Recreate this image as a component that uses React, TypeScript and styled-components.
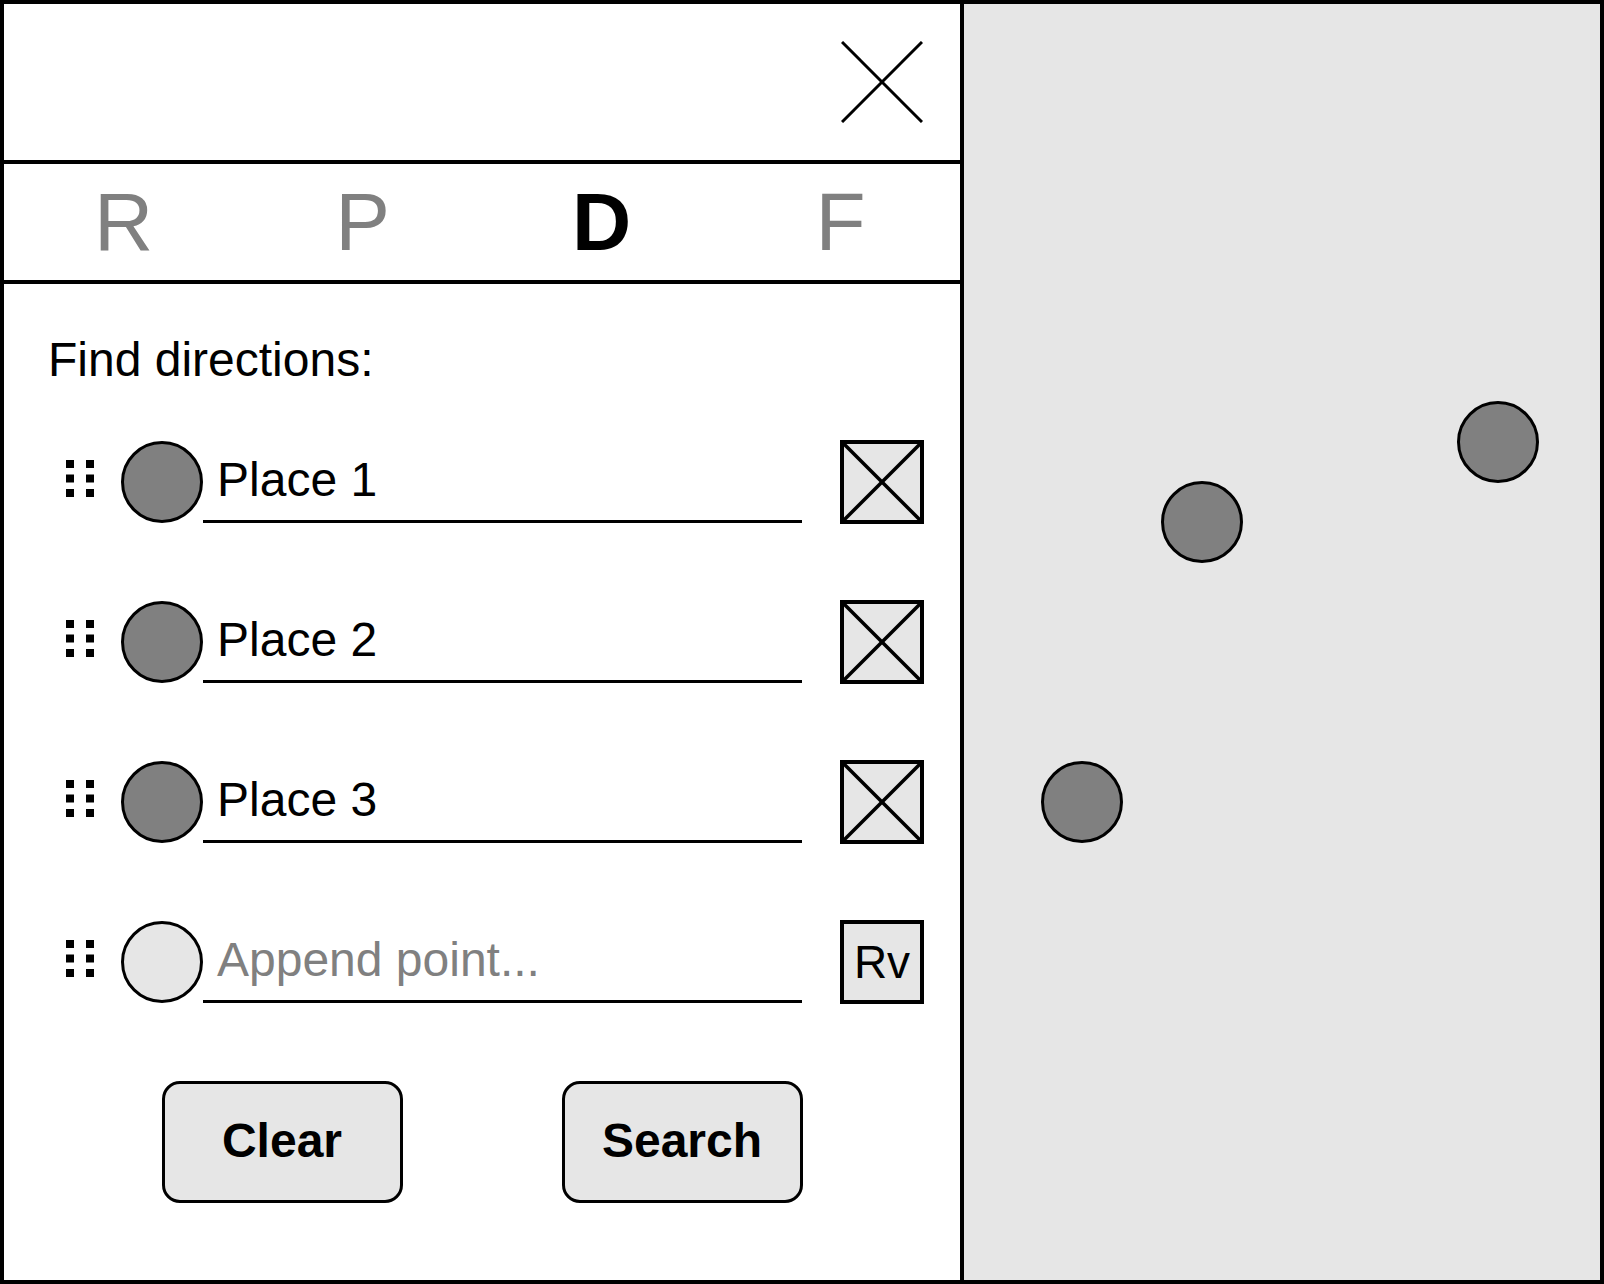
import React from 'react'
import styled, { createGlobalStyle } from 'styled-components'

const GlobalStyle = createGlobalStyle`
  html, body {
    margin: 0;
    padding: 0;
    background: #ffffff;
  }
  * {
    box-sizing: border-box;
  }
`

const Frame = styled.div`
  width: 1604px;
  height: 1284px;
  border: 4px solid #000;
  display: flex;
  font-family: 'Liberation Sans', Arial, sans-serif;
  color: #000;
  background: #fff;
`

const Panel = styled.div`
  width: 960px;
  flex-shrink: 0;
  border-right: 4px solid #000;
  display: flex;
  flex-direction: column;
`

const Header = styled.div`
  height: 160px;
  border-bottom: 4px solid #000;
  display: flex;
  align-items: center;
  justify-content: flex-end;
  padding-right: 37px;
`

const CloseButton = styled.button`
  border: none;
  background: none;
  padding: 0;
  width: 82px;
  height: 82px;
  cursor: pointer;
  display: block;
`

const Tabs = styled.div`
  height: 120px;
  border-bottom: 4px solid #000;
  display: grid;
  grid-template-columns: repeat(4, 1fr);
`

const Tab = styled.div<{ $active?: boolean }>`
  display: flex;
  align-items: center;
  justify-content: center;
  font-size: 82px;
  line-height: 1;
  font-weight: ${(p) => (p.$active ? 700 : 400)};
  color: ${(p) => (p.$active ? '#000' : '#808080')};
`

const Body = styled.div`
  display: flex;
  flex-direction: column;
  padding: 48px 36px 0 44px;
`

const Title = styled.div`
  font-size: 48px;
  line-height: 56px;
  height: 56px;
  margin-bottom: 52px;
`

const List = styled.div`
  display: flex;
  flex-direction: column;
  gap: 76px;
`

const Row = styled.div`
  height: 84px;
  display: flex;
  align-items: center;
  padding-left: 18px;
`

const Handle = styled.svg`
  width: 28px;
  height: 37px;
  margin-top: -8px;
  margin-right: 27px;
  flex-shrink: 0;
`

const Pin = styled.div<{ $empty?: boolean }>`
  width: 82px;
  height: 82px;
  border-radius: 50%;
  border: 3.5px solid #000;
  background: ${(p) => (p.$empty ? '#e6e6e6' : '#808080')};
  flex-shrink: 0;
`

const Field = styled.div<{ $placeholder?: boolean }>`
  width: 599px;
  height: 83px;
  align-self: flex-start;
  border-bottom: 3px solid #000;
  display: flex;
  align-items: center;
  padding: 0 0 0 14px;
  font-size: 48px;
  line-height: 56px;
  color: ${(p) => (p.$placeholder ? '#808080' : '#000')};
`

const Square = styled.div`
  width: 84px;
  height: 84px;
  margin-left: 38px;
  border: 4px solid #000;
  background: #e6e6e6;
  display: flex;
  align-items: center;
  justify-content: center;
  font-size: 46px;
  line-height: 1;
  flex-shrink: 0;
  overflow: hidden;

  svg {
    display: block;
    width: 100%;
    height: 100%;
  }
`

const Actions = styled.div`
  display: flex;
  justify-content: center;
  gap: 159px;
  margin-top: 77px;
  margin-left: -8px;
`

const ActionButton = styled.button`
  width: 241px;
  height: 122px;
  border: 3px solid #000;
  border-radius: 18px;
  background: #e6e6e6;
  font-family: 'Liberation Sans', Arial, sans-serif;
  font-size: 48px;
  font-weight: 700;
  color: #000;
  padding: 0 0 4px;
  cursor: pointer;
`

const Map = styled.div`
  flex: 1;
  background: #e6e6e6;
  position: relative;
`

const Marker = styled.div`
  position: absolute;
  width: 82px;
  height: 82px;
  border-radius: 50%;
  border: 3.5px solid #000;
  background: #808080;
`

const DragHandle = () => (
  <Handle viewBox="0 0 28 37">
    {[0, 14.5, 29].map((y) =>
      [0, 20].map((x) => <rect key={`${x}-${y}`} x={x} y={y} width="8" height="8" fill="#000" />)
    )}
  </Handle>
)

const RemoveBox = () => (
  <Square>
    <svg viewBox="0 0 76 76" preserveAspectRatio="none">
      <line x1="0" y1="0" x2="76" y2="76" stroke="#000" strokeWidth="3.5" />
      <line x1="76" y1="0" x2="0" y2="76" stroke="#000" strokeWidth="3.5" />
    </svg>
  </Square>
)

const places = ['Place 1', 'Place 2', 'Place 3']

const markers = [
  { left: 493, top: 397 },
  { left: 197, top: 477 },
  { left: 77, top: 757 },
]

export default function App() {
  return (
    <>
      <GlobalStyle />
      <Frame>
        <Panel>
          <Header>
            <CloseButton aria-label="Close">
              <svg width="82" height="82" viewBox="0 0 82 82">
                <line x1="1" y1="1" x2="81" y2="81" stroke="#000" strokeWidth="3" />
                <line x1="81" y1="1" x2="1" y2="81" stroke="#000" strokeWidth="3" />
              </svg>
            </CloseButton>
          </Header>
          <Tabs>
            <Tab>R</Tab>
            <Tab>P</Tab>
            <Tab $active>D</Tab>
            <Tab>F</Tab>
          </Tabs>
          <Body>
            <Title>Find directions:</Title>
            <List>
              {places.map((place) => (
                <Row key={place}>
                  <DragHandle />
                  <Pin />
                  <Field>{place}</Field>
                  <RemoveBox />
                </Row>
              ))}
              <Row>
                <DragHandle />
                <Pin $empty />
                <Field $placeholder>Append point...</Field>
                <Square>Rv</Square>
              </Row>
            </List>
            <Actions>
              <ActionButton>Clear</ActionButton>
              <ActionButton>Search</ActionButton>
            </Actions>
          </Body>
        </Panel>
        <Map>
          {markers.map((m, i) => (
            <Marker key={i} style={{ left: m.left, top: m.top }} />
          ))}
        </Map>
      </Frame>
    </>
  )
}
